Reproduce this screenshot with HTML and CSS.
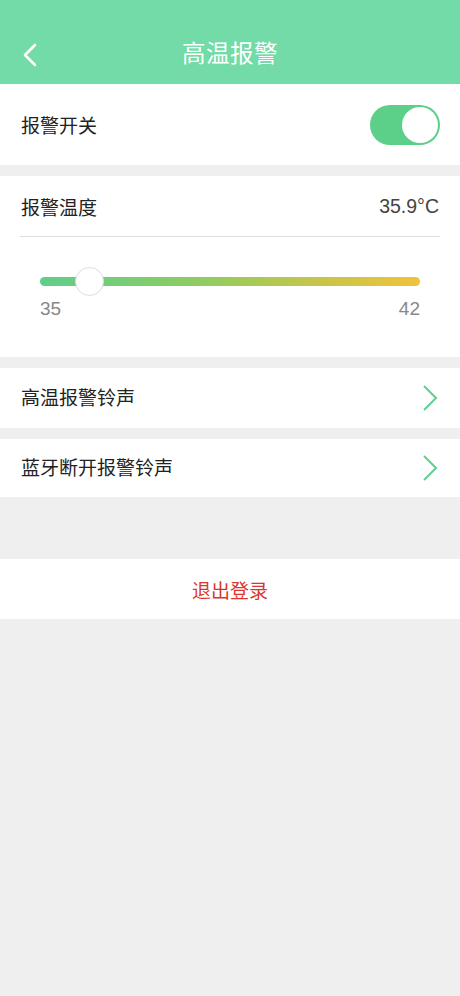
FILE: index.html
```html
<!DOCTYPE html>
<html lang="zh">
<head>
    <meta charset="UTF-8">
    <title>高温报警</title>
    <link rel="stylesheet" href="styles.css">
</head>
<body>
<div class="header">
    <svg class="back" width="16" height="24" viewBox="0 0 16 24">
        <polyline points="13,2 3,12 13,22" fill="none" stroke="#fff" stroke-width="2.6" stroke-linecap="round" stroke-linejoin="round"/>
    </svg>
    <span class="title">高温报警</span>
</div>

<div class="row switch-row">
    <span>报警开关</span>
    <div class="switch"><i></i></div>
</div>

<div class="card">
    <div class="temp-head">
        <span>报警温度</span>
        <span class="temp-val">35.9°C</span>
    </div>
    <div class="slider">
        <div class="track"><i class="thumb"></i></div>
        <div class="marks"><span>35</span><span>42</span></div>
    </div>
</div>

<div class="row link-row">
    <span>高温报警铃声</span>
    <svg width="16" height="28" viewBox="0 0 16 28"><polyline points="2,2 14,14 2,26" fill="none" stroke="#5fcf94" stroke-width="2"/></svg>
</div>
<div class="row link-row second">
    <span>蓝牙断开报警铃声</span>
    <svg width="16" height="28" viewBox="0 0 16 28"><polyline points="2,2 14,14 2,26" fill="none" stroke="#5fcf94" stroke-width="2"/></svg>
</div>

<div class="logout">退出登录</div>
</body>
</html>
```

FILE: styles.css
```css
body{
    margin: 0;
    background: #efefef;
    font-family: "Noto Sans CJK SC", "Noto Sans", sans-serif;
    color: #222;
}
.header{
    height: 84px;
    background: #73dba7;
    display: flex;
    align-items: center;
    justify-content: center;
    position: relative;
    padding-top: 20px;
    box-sizing: border-box;
}
.header .back{
    position: absolute;
    left: 22px;
    top: 43px;
}
.header .title{
    color: #fff;
    font-size: 23.5px;
    letter-spacing: 0.5px;
}
.row{
    background: #fff;
    display: flex;
    align-items: center;
    justify-content: space-between;
    padding: 0 21px 0 21px;
    font-size: 19px;
}
.switch-row{
    height: 81px;
}
.switch{
    width: 70px;
    height: 40px;
    border-radius: 20px;
    background: #5ccf88;
    position: relative;
    margin-right: -1px;
}
.switch i{
    position: absolute;
    right: 2px;
    top: 2px;
    width: 36px;
    height: 36px;
    border-radius: 50%;
    background: #fff;
}
.card{
    background: #fff;
    margin-top: 11px;
    padding: 0 20px;
    height: 181px;
}
.temp-head{
    height: 60px;
    display: flex;
    align-items: center;
    justify-content: space-between;
    font-size: 19px;
    border-bottom: 1px solid #ddd;
    padding: 0 1px;
}
.temp-val{
    font-family: "Liberation Sans", Arial, sans-serif;
    color: #444;
    font-size: 19.5px;
}
.slider{
    padding: 0 20px;
}
.track{
    margin-top: 40px;
    height: 9px;
    border-radius: 5px;
    background: linear-gradient(90deg, #5fcf88, #8ccc63 40%, #c9c546 75%, #f0c33d);
    position: relative;
}
.thumb{
    position: absolute;
    left: 35px;
    top: -10px;
    width: 27px;
    height: 27px;
    border-radius: 50%;
    background: #fff;
    border: 1px solid #ddd;
}
.marks{
    display: flex;
    justify-content: space-between;
    margin-top: 12px;
    font-family: "Liberation Sans", Arial, sans-serif;
    font-size: 19px;
    color: #888;
}
.link-row{
    margin-top: 11px;
    height: 60px;
    padding-right: 22px;
}
.link-row span{
    margin-top: -3px;
}
.link-row.second{
    height: 58px;
}
.logout{
    margin-top: 62px;
    height: 60px;
    background: #fff;
    color: #d9362c;
    font-size: 19px;
    display: flex;
    align-items: center;
    justify-content: center;
}
```
